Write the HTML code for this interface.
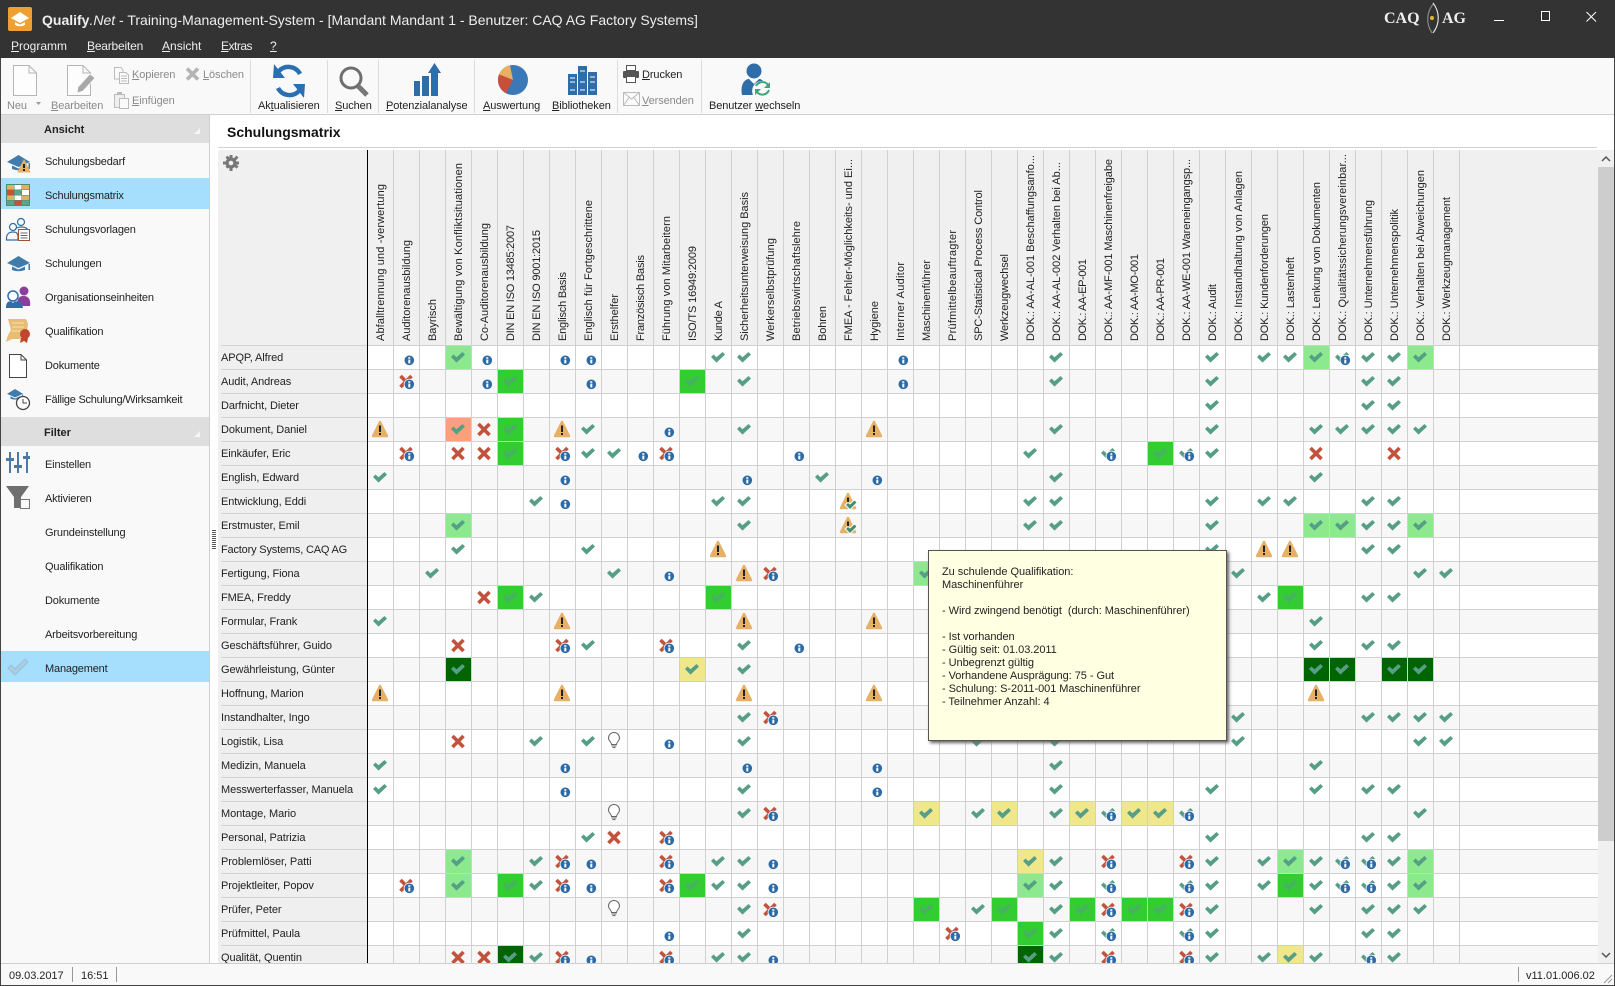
<!DOCTYPE html>
<html lang="de"><head><meta charset="utf-8"><title>Qualify.Net</title>
<style>
html,body{margin:0;padding:0;background:#fff}
body{width:1615px;height:986px;position:relative;overflow:hidden;font:11px/14px "Liberation Sans",sans-serif;color:#222}
div,span.a{position:absolute}
svg{position:absolute;left:0;top:0}
.t{white-space:nowrap}
.g{color:#8a8a8a}
.m{color:#eee;font-size:12px;top:39px;white-space:nowrap}
.tb{top:99px;white-space:nowrap;letter-spacing:-.1px}
.sm{top:68px;white-space:nowrap;letter-spacing:-.1px}
.sb{left:45px;white-space:nowrap;height:14px;letter-spacing:-.17px}
.n{left:3px;width:146px;height:23px;border-top:1px solid #d3d3d3;line-height:25px;white-space:nowrap;letter-spacing:-.1px}
u{text-decoration:underline}
text{font:11px "Liberation Sans",sans-serif;fill:#222}
</style></head><body>

<div style="left:0;top:0;width:1615px;height:58px;background:#333"></div>
<div style="left:0;top:58px;width:1615px;height:56px;background:#f9f9f9;border-bottom:1px solid #d0d0d0"></div>

<div class="t" style="left:42px;top:12px;color:#eee;font-size:14px;line-height:16px"><b>Qualify</b><i style="font-weight:400">.Net</i> - Training-Management-System - [Mandant Mandant 1 - Benutzer: CAQ AG Factory Systems]</div>
<div class="m" style="left:11px"><u>P</u>rogramm</div>
<div class="m" style="left:87px;letter-spacing:-.2px"><u>B</u>earbeiten</div>
<div class="m" style="left:162px"><u>A</u>nsicht</div>
<div class="m" style="left:221px;letter-spacing:-.5px"><u>E</u>xtras</div>
<div class="m" style="left:270px"><u>?</u></div>

<div class="t" style="left:1384px;top:10px;color:#eee;font:bold 16px/18px 'Liberation Serif',serif">CAQ</div>
<div class="t" style="left:1442px;top:10px;color:#eee;font:bold 16px/18px 'Liberation Serif',serif">AG</div>

<!-- toolbar labels -->
<div class="tb g" style="left:7px">Neu</div>
<div class="tb g" style="left:51px"><u>B</u>earbeiten</div>
<div class="sm g" style="left:132px"><u>K</u>opieren</div>
<div class="sm g" style="left:203px"><u>L</u>öschen</div>
<div class="sm g" style="left:132px;top:94px"><u>E</u>infügen</div>
<div class="tb" style="left:258px">Ak<u>t</u>ualisieren</div>
<div class="tb" style="left:335px"><u>S</u>uchen</div>
<div class="tb" style="left:386px"><u>P</u>otenzialanalyse</div>
<div class="tb" style="left:483px"><u>A</u>uswertung</div>
<div class="tb" style="left:552px"><u>B</u>ibliotheken</div>
<div class="sm" style="left:642px"><u>D</u>rucken</div>
<div class="sm g" style="left:642px;top:94px"><u>V</u>ersenden</div>
<div class="tb" style="left:709px">Benutzer <u>w</u>echseln</div>

<!-- sidebar -->
<div style="left:1px;top:115px;width:208px;height:848px;background:#f9f9f9"></div>
<div style="left:209px;top:115px;width:1px;height:848px;background:#cfcfcf"></div>
<div style="left:1px;top:115px;width:208px;height:28px;background:#dedede"></div>
<div style="left:1px;top:417px;width:208px;height:29px;background:#dedede"></div>
<div style="left:1px;top:178px;width:208px;height:31px;background:#a6defe"></div>
<div style="left:1px;top:651px;width:208px;height:31px;background:#a6defe"></div>
<div class="t" style="left:44px;top:123px"><b>Ansicht</b></div>
<div class="t" style="left:44px;top:426px"><b>Filter</b></div>
<div class="sb" style="top:155px">Schulungsbedarf</div>
<div class="sb" style="top:189px">Schulungsmatrix</div>
<div class="sb" style="top:223px">Schulungsvorlagen</div>
<div class="sb" style="top:257px">Schulungen</div>
<div class="sb" style="top:291px">Organisationseinheiten</div>
<div class="sb" style="top:325px">Qualifikation</div>
<div class="sb" style="top:359px">Dokumente</div>
<div class="sb" style="top:393px;letter-spacing:-.25px">Fällige Schulung/Wirksamkeit</div>
<div class="sb" style="top:458px">Einstellen</div>
<div class="sb" style="top:492px">Aktivieren</div>
<div class="sb" style="top:526px">Grundeinstellung</div>
<div class="sb" style="top:560px">Qualifikation</div>
<div class="sb" style="top:594px">Dokumente</div>
<div class="sb" style="top:628px">Arbeitsvorbereitung</div>
<div class="sb" style="top:662px">Management</div>

<!-- content title -->
<div class="t" style="left:227px;top:123px;font:bold 14px/18px 'Liberation Sans',sans-serif;color:#111">Schulungsmatrix</div>
<div style="left:218px;top:147px;width:1379px;height:1px;background:#d3d3d3"></div>

<!-- grid -->
<div style="left:218px;top:150px;width:1380px;height:813px;overflow:hidden">
  <div style="left:0;top:0;width:1380px;height:195px;background:#f0f0f0"></div>
  <div style="left:149px;top:0;width:1093px;height:195px;background:linear-gradient(90deg,#d0d0d0 1px,transparent 1px) 0 0/26px 100%"></div>
  <div style="left:149px;top:195px;width:1231px;height:624px;background:repeating-linear-gradient(180deg,#fff 0 24px,#f7f7f7 24px 48px)"></div>
  <div style="left:149px;top:195px;width:1231px;height:624px;background:linear-gradient(#d0d0d0 1px,transparent 1px) 0 0/100% 24px"></div>
  <div style="left:149px;top:195px;width:1093px;height:624px;background:linear-gradient(90deg,#d0d0d0 1px,transparent 1px) 0 0/26px 100%"></div>
  <div style="left:0;top:195px;width:149px;height:624px;background:#efefef">
    <div class="n" style="top:0">APQP, Alfred</div>
    <div class="n" style="top:24px">Audit, Andreas</div>
    <div class="n" style="top:48px">Darfnicht, Dieter</div>
    <div class="n" style="top:72px">Dokument, Daniel</div>
    <div class="n" style="top:96px">Einkäufer, Eric</div>
    <div class="n" style="top:120px">English, Edward</div>
    <div class="n" style="top:144px">Entwicklung, Eddi</div>
    <div class="n" style="top:168px">Erstmuster, Emil</div>
    <div class="n" style="top:192px;letter-spacing:-.18px">Factory Systems, CAQ AG</div>
    <div class="n" style="top:216px">Fertigung, Fiona</div>
    <div class="n" style="top:240px">FMEA, Freddy</div>
    <div class="n" style="top:264px">Formular, Frank</div>
    <div class="n" style="top:288px">Geschäftsführer, Guido</div>
    <div class="n" style="top:312px">Gewährleistung, Günter</div>
    <div class="n" style="top:336px">Hoffnung, Marion</div>
    <div class="n" style="top:360px">Instandhalter, Ingo</div>
    <div class="n" style="top:384px">Logistik, Lisa</div>
    <div class="n" style="top:408px">Medizin, Manuela</div>
    <div class="n" style="top:432px">Messwerterfasser, Manuela</div>
    <div class="n" style="top:456px">Montage, Mario</div>
    <div class="n" style="top:480px">Personal, Patrizia</div>
    <div class="n" style="top:504px">Problemlöser, Patti</div>
    <div class="n" style="top:528px">Projektleiter, Popov</div>
    <div class="n" style="top:552px">Prüfer, Peter</div>
    <div class="n" style="top:576px">Prüfmittel, Paula</div>
    <div class="n" style="top:600px">Qualität, Quentin</div>
  </div>
  <div style="left:149px;top:0;width:1px;height:813px;background:#000"></div>

  <svg width="1380" height="813" style="left:0;top:0">
  <defs>
    <polygon id="c" points="6,12 8.5,9.5 11.5,12.2 17.5,7 20,9.6 11.5,17.6" fill="#569f86"/>
    <path id="x" d="M7.5 7 18.5 18M18.5 7 7.5 18" stroke="#c1523b" stroke-width="3.6" fill="none"/>
    <g id="inf"><circle cx="16.3" cy="15.3" r="4.8" fill="#2e6ba6"/><rect x="15.3" y="12.2" width="2" height="1.6" fill="#fff"/><rect x="15.3" y="14.6" width="2" height="3.8" fill="#fff"/></g>
    <use id="i" href="#inf"/>
    <g id="ring"><circle cx="16.3" cy="15.3" r="5.6" fill="#fff"/><use href="#inf"/></g>
    <g id="X"><use href="#x"/><use href="#ring"/></g>
    <g id="C"><use href="#c"/><use href="#ring"/></g>
    <g id="w"><path d="M13 5 20 19H6Z" fill="#e6b066" stroke="#e6b066" stroke-width="2.4" stroke-linejoin="round"/><rect x="12" y="8.5" width="2" height="6.5" fill="#222"/><rect x="12" y="16" width="2" height="2" fill="#222"/></g>
    <g id="W"><use href="#w"/><polygon points="11,16 13,14 15,15.6 19.5,11.5 21.5,13.5 15,20" fill="#fff" stroke="#fff" stroke-width="2"/><polygon points="11,16 13,14 15,15.6 19.5,11.5 21.5,13.5 15,20" fill="#3f8f74"/></g>
    <g id="b" fill="none" stroke="#666" stroke-width="1"><path d="M10.5 15.5C10.5 13 7.5 12 7.5 9A5.5 5.5 0 0 1 18.5 9C18.5 12 15.5 13 15.5 15.5Z" fill="#fff"/><path d="M10.5 17h5M11.5 18.6h3"/></g>
    <g id="L"><rect x="1" y="1" width="25" height="23" fill="#8de98d"/><use href="#c"/></g>
    <g id="G"><rect x="1" y="1" width="25" height="23" fill="#33cc33"/><use href="#c" opacity=".6"/></g>
    <g id="D"><rect x="1" y="1" width="25" height="23" fill="#006400"/><use href="#c"/></g>
    <g id="Y"><rect x="1" y="1" width="25" height="23" fill="#f0e68c"/><use href="#c"/></g>
    <g id="O"><rect x="1" y="1" width="25" height="23" fill="#fb9f7c"/><use href="#c"/></g>
  </defs>
  <!-- column headers -->
  <g transform="translate(-218,-150)">
    <text textLength="157" transform="translate(384,341) rotate(-90)">Abfalltrennung und -verwertung</text>
    <text textLength="101" transform="translate(410,341) rotate(-90)">Auditorenausbildung</text>
    <text textLength="42" transform="translate(436,341) rotate(-90)">Bayrisch</text>
    <text textLength="178" transform="translate(462,341) rotate(-90)">Bewältigung von Konfliktsituationen</text>
    <text textLength="118" transform="translate(488,341) rotate(-90)">Co-Auditorenausbildung</text>
    <text textLength="116" transform="translate(514,341) rotate(-90)">DIN EN ISO 13485:2007</text>
    <text textLength="111" transform="translate(540,341) rotate(-90)">DIN EN ISO 9001:2015</text>
    <text textLength="69" transform="translate(566,341) rotate(-90)">Englisch Basis</text>
    <text textLength="141" transform="translate(592,341) rotate(-90)">Englisch für Fortgeschrittene</text>
    <text textLength="47" transform="translate(618,341) rotate(-90)">Ersthelfer</text>
    <text textLength="86" transform="translate(644,341) rotate(-90)">Französisch Basis</text>
    <text textLength="125" transform="translate(670,341) rotate(-90)">Führung von Mitarbeitern</text>
    <text textLength="95" transform="translate(696,341) rotate(-90)">ISO/TS 16949:2009</text>
    <text textLength="40" transform="translate(722,341) rotate(-90)">Kunde A</text>
    <text textLength="149" transform="translate(748,341) rotate(-90)">Sicherheitsunterweisung Basis</text>
    <text textLength="103" transform="translate(774,341) rotate(-90)">Werkerselbstprüfung</text>
    <text textLength="120" transform="translate(800,341) rotate(-90)">Betriebswirtschaftslehre</text>
    <text textLength="35" transform="translate(826,341) rotate(-90)">Bohren</text>
    <text textLength="182" transform="translate(852,341) rotate(-90)">FMEA - Fehler-Möglichkeits- und Ei...</text>
    <text textLength="40" transform="translate(878,341) rotate(-90)">Hygiene</text>
    <text textLength="79" transform="translate(904,341) rotate(-90)">Interner Auditor</text>
    <text textLength="81" transform="translate(930,341) rotate(-90)">Maschinenführer</text>
    <text textLength="111" transform="translate(956,341) rotate(-90)">Prüfmittelbeauftragter</text>
    <text textLength="151" transform="translate(982,341) rotate(-90)">SPC-Statistical Process Control</text>
    <text textLength="87" transform="translate(1008,341) rotate(-90)">Werkzeugwechsel</text>
    <text textLength="186" transform="translate(1034,341) rotate(-90)">DOK.: AA-AL-001 Beschaffungsanfo...</text>
    <text textLength="179" transform="translate(1060,341) rotate(-90)">DOK.: AA-AL-002 Verhalten bei Ab...</text>
    <text textLength="82" transform="translate(1086,341) rotate(-90)">DOK.: AA-EP-001</text>
    <text textLength="182" transform="translate(1112,341) rotate(-90)">DOK.: AA-MF-001 Maschinenfreigabe</text>
    <text textLength="87" transform="translate(1138,341) rotate(-90)">DOK.: AA-MO-001</text>
    <text textLength="83" transform="translate(1164,341) rotate(-90)">DOK.: AA-PR-001</text>
    <text textLength="182" transform="translate(1190,341) rotate(-90)">DOK.: AA-WE-001 Wareneingangsp...</text>
    <text textLength="57" transform="translate(1216,341) rotate(-90)">DOK.: Audit</text>
    <text textLength="170" transform="translate(1242,341) rotate(-90)">DOK.: Instandhaltung von Anlagen</text>
    <text textLength="127" transform="translate(1268,341) rotate(-90)">DOK.: Kundenforderungen</text>
    <text textLength="84" transform="translate(1294,341) rotate(-90)">DOK.: Lastenheft</text>
    <text textLength="159" transform="translate(1320,341) rotate(-90)">DOK.: Lenkung von Dokumenten</text>
    <text textLength="187" transform="translate(1346,341) rotate(-90)">DOK.: Qualitätssicherungsvereinbar...</text>
    <text textLength="141" transform="translate(1372,341) rotate(-90)">DOK.: Unternehmensführung</text>
    <text textLength="132" transform="translate(1398,341) rotate(-90)">DOK.: Unternehmenspolitik</text>
    <text textLength="171" transform="translate(1424,341) rotate(-90)">DOK.: Verhalten bei Abweichungen</text>
    <text textLength="144" transform="translate(1450,341) rotate(-90)">DOK.: Werkzeugmanagement</text>
  </g>
  <!-- cells -->
  <g transform="translate(149,195)">
  <g><use href="#i" x="26"/><use href="#L" x="78"/><use href="#i" x="104"/><use href="#i" x="182"/><use href="#i" x="208"/><use href="#c" x="338"/><use href="#c" x="364"/><use href="#i" x="520"/><use href="#c" x="676"/><use href="#c" x="832"/><use href="#c" x="884"/><use href="#c" x="910"/><use href="#L" x="936"/><use href="#C" x="962"/><use href="#c" x="988"/><use href="#c" x="1014"/><use href="#L" x="1040"/></g>
  <g transform="translate(0,24)"><use href="#X" x="26"/><use href="#i" x="104"/><use href="#G" x="130"/><use href="#i" x="208"/><use href="#G" x="312"/><use href="#c" x="364"/><use href="#i" x="520"/><use href="#c" x="676"/><use href="#c" x="832"/><use href="#c" x="988"/><use href="#c" x="1014"/></g>
  <g transform="translate(0,48)"><use href="#c" x="832"/><use href="#c" x="988"/><use href="#c" x="1014"/></g>
  <g transform="translate(0,72)"><use href="#w" x="0"/><use href="#O" x="78"/><use href="#x" x="104"/><use href="#G" x="130"/><use href="#w" x="182"/><use href="#c" x="208"/><use href="#i" x="286"/><use href="#c" x="364"/><use href="#w" x="494"/><use href="#c" x="676"/><use href="#c" x="832"/><use href="#c" x="936"/><use href="#c" x="962"/><use href="#c" x="988"/><use href="#c" x="1014"/><use href="#c" x="1040"/></g>
  <g transform="translate(0,96)"><use href="#X" x="26"/><use href="#x" x="78"/><use href="#x" x="104"/><use href="#G" x="130"/><use href="#X" x="182"/><use href="#c" x="208"/><use href="#c" x="234"/><use href="#i" x="260"/><use href="#X" x="286"/><use href="#i" x="416"/><use href="#c" x="650"/><use href="#C" x="728"/><use href="#G" x="780"/><use href="#C" x="806"/><use href="#c" x="832"/><use href="#x" x="936"/><use href="#x" x="1014"/></g>
  <g transform="translate(0,120)"><use href="#c" x="0"/><use href="#i" x="182"/><use href="#i" x="364"/><use href="#c" x="442"/><use href="#i" x="494"/><use href="#c" x="676"/><use href="#c" x="936"/></g>
  <g transform="translate(0,144)"><use href="#c" x="156"/><use href="#i" x="182"/><use href="#c" x="338"/><use href="#c" x="364"/><use href="#W" x="468"/><use href="#c" x="650"/><use href="#c" x="676"/><use href="#c" x="832"/><use href="#c" x="884"/><use href="#c" x="910"/><use href="#c" x="988"/><use href="#c" x="1014"/></g>
  <g transform="translate(0,168)"><use href="#L" x="78"/><use href="#c" x="364"/><use href="#W" x="468"/><use href="#c" x="650"/><use href="#c" x="676"/><use href="#c" x="832"/><use href="#L" x="936"/><use href="#L" x="962"/><use href="#c" x="988"/><use href="#c" x="1014"/><use href="#L" x="1040"/></g>
  <g transform="translate(0,192)"><use href="#c" x="78"/><use href="#c" x="208"/><use href="#w" x="338"/><use href="#c" x="832"/><use href="#w" x="884"/><use href="#w" x="910"/><use href="#c" x="988"/><use href="#c" x="1014"/></g>
  <g transform="translate(0,216)"><use href="#c" x="52"/><use href="#c" x="234"/><use href="#i" x="286"/><use href="#w" x="364"/><use href="#X" x="390"/><use href="#L" x="546"/><use href="#c" x="858"/><use href="#c" x="1040"/><use href="#c" x="1066"/></g>
  <g transform="translate(0,240)"><use href="#x" x="104"/><use href="#G" x="130"/><use href="#c" x="156"/><use href="#G" x="338"/><use href="#c" x="884"/><use href="#G" x="910"/><use href="#c" x="988"/><use href="#c" x="1014"/></g>
  <g transform="translate(0,264)"><use href="#c" x="0"/><use href="#w" x="182"/><use href="#w" x="364"/><use href="#w" x="494"/><use href="#c" x="936"/></g>
  <g transform="translate(0,288)"><use href="#x" x="78"/><use href="#X" x="182"/><use href="#c" x="208"/><use href="#X" x="286"/><use href="#c" x="364"/><use href="#i" x="416"/><use href="#c" x="936"/><use href="#c" x="988"/><use href="#c" x="1014"/></g>
  <g transform="translate(0,312)"><use href="#D" x="78"/><use href="#Y" x="312"/><use href="#c" x="364"/><use href="#D" x="936"/><use href="#D" x="962"/><use href="#D" x="1014"/><use href="#D" x="1040"/></g>
  <g transform="translate(0,336)"><use href="#w" x="0"/><use href="#w" x="182"/><use href="#w" x="364"/><use href="#w" x="494"/><use href="#w" x="936"/></g>
  <g transform="translate(0,360)"><use href="#c" x="364"/><use href="#X" x="390"/><use href="#c" x="858"/><use href="#c" x="988"/><use href="#c" x="1014"/><use href="#c" x="1040"/><use href="#c" x="1066"/></g>
  <g transform="translate(0,384)"><use href="#x" x="78"/><use href="#c" x="156"/><use href="#c" x="208"/><use href="#b" x="234"/><use href="#i" x="286"/><use href="#c" x="364"/><use href="#c" x="598"/><use href="#c" x="676"/><use href="#c" x="858"/><use href="#c" x="1040"/><use href="#c" x="1066"/></g>
  <g transform="translate(0,408)"><use href="#c" x="0"/><use href="#i" x="182"/><use href="#i" x="364"/><use href="#i" x="494"/><use href="#c" x="676"/><use href="#c" x="936"/></g>
  <g transform="translate(0,432)"><use href="#c" x="0"/><use href="#i" x="182"/><use href="#c" x="364"/><use href="#i" x="494"/><use href="#c" x="676"/><use href="#c" x="832"/><use href="#c" x="936"/><use href="#c" x="988"/><use href="#c" x="1014"/></g>
  <g transform="translate(0,456)"><use href="#b" x="234"/><use href="#c" x="364"/><use href="#X" x="390"/><use href="#Y" x="546"/><use href="#c" x="598"/><use href="#Y" x="624"/><use href="#c" x="676"/><use href="#Y" x="702"/><use href="#C" x="728"/><use href="#Y" x="754"/><use href="#Y" x="780"/><use href="#C" x="806"/><use href="#c" x="1040"/></g>
  <g transform="translate(0,480)"><use href="#c" x="208"/><use href="#x" x="234"/><use href="#X" x="286"/><use href="#c" x="832"/><use href="#c" x="988"/><use href="#c" x="1014"/></g>
  <g transform="translate(0,504)"><use href="#L" x="78"/><use href="#c" x="156"/><use href="#X" x="182"/><use href="#i" x="208"/><use href="#X" x="286"/><use href="#c" x="338"/><use href="#c" x="364"/><use href="#i" x="390"/><use href="#Y" x="650"/><use href="#c" x="676"/><use href="#X" x="728"/><use href="#X" x="806"/><use href="#c" x="832"/><use href="#c" x="884"/><use href="#L" x="910"/><use href="#c" x="936"/><use href="#C" x="962"/><use href="#C" x="988"/><use href="#c" x="1014"/><use href="#L" x="1040"/></g>
  <g transform="translate(0,528)"><use href="#X" x="26"/><use href="#L" x="78"/><use href="#G" x="130"/><use href="#c" x="156"/><use href="#X" x="182"/><use href="#i" x="208"/><use href="#X" x="286"/><use href="#G" x="312"/><use href="#c" x="338"/><use href="#c" x="364"/><use href="#i" x="390"/><use href="#L" x="650"/><use href="#c" x="676"/><use href="#C" x="728"/><use href="#C" x="806"/><use href="#c" x="832"/><use href="#c" x="884"/><use href="#G" x="910"/><use href="#c" x="936"/><use href="#C" x="962"/><use href="#C" x="988"/><use href="#c" x="1014"/><use href="#L" x="1040"/></g>
  <g transform="translate(0,552)"><use href="#b" x="234"/><use href="#c" x="364"/><use href="#X" x="390"/><use href="#G" x="546"/><use href="#c" x="598"/><use href="#G" x="624"/><use href="#c" x="676"/><use href="#G" x="702"/><use href="#X" x="728"/><use href="#G" x="754"/><use href="#G" x="780"/><use href="#X" x="806"/><use href="#c" x="832"/><use href="#c" x="936"/><use href="#c" x="988"/><use href="#c" x="1014"/><use href="#c" x="1040"/></g>
  <g transform="translate(0,576)"><use href="#i" x="286"/><use href="#c" x="364"/><use href="#X" x="572"/><use href="#G" x="650"/><use href="#c" x="676"/><use href="#C" x="728"/><use href="#C" x="806"/><use href="#c" x="832"/><use href="#c" x="988"/><use href="#c" x="1014"/></g>
  <g transform="translate(0,600)"><use href="#x" x="78"/><use href="#x" x="104"/><use href="#D" x="130"/><use href="#c" x="156"/><use href="#X" x="182"/><use href="#i" x="208"/><use href="#X" x="286"/><use href="#c" x="338"/><use href="#c" x="364"/><use href="#i" x="390"/><use href="#D" x="650"/><use href="#c" x="676"/><use href="#X" x="728"/><use href="#X" x="806"/><use href="#c" x="832"/><use href="#c" x="884"/><use href="#Y" x="910"/><use href="#c" x="936"/><use href="#C" x="988"/><use href="#c" x="1014"/></g>
  </g>
  </svg>
</div>

<!-- scrollbar -->
<div style="left:1598px;top:150px;width:16px;height:813px;background:#f0f0f0"></div>
<div style="left:1598px;top:167px;width:16px;height:674px;background:#cdcdcd"></div>

<!-- status bar -->
<div style="left:0;top:963px;width:1615px;height:22px;background:#f9f9f9;border-top:1px solid #cfcfcf"></div>
<div class="t" style="left:9px;top:969px;letter-spacing:-.05px">09.03.2017</div>
<div class="t" style="left:81px;top:969px">16:51</div>
<div style="left:72px;top:967px;width:1px;height:15px;background:#999"></div>
<div style="left:116px;top:967px;width:1px;height:15px;background:#999"></div>
<div style="left:1518px;top:967px;width:1px;height:15px;background:#999"></div>
<div class="t" style="left:1526px;top:969px">v11.01.006.02</div>

<!-- chrome icons -->
<svg width="1615" height="986" style="pointer-events:none">
  <!-- app icon -->
  <rect x="8" y="7" width="24" height="24" rx="2" fill="#f0a030"/>
  <path d="M11 18 20 12 29 18 20 23Z M15 22v3q5 2.5 10 0v-3l-5 2.6Z" fill="#fff"/>
  <!-- logo arc -->
  <path d="M1434 3C1426 12 1426 24 1432 33" stroke="#888" stroke-width="1.2" fill="none"/>
  <path d="M1433 3C1440 12 1440 24 1433 33" stroke="#ddd" stroke-width="1.2" fill="none"/>
  <circle cx="1432" cy="18" r="2" fill="#e8b830"/>
  <!-- window buttons -->
  <rect x="1494" y="20" width="10" height="1" fill="#fff"/>
  <rect x="1541.5" y="11.5" width="8" height="9" fill="none" stroke="#fff"/>
  <path d="M1586.5 12 1596 21.5M1596 12 1586.5 21.5" stroke="#fff" fill="none"/>

  <!-- Neu -->
  <path d="M13.5 65.5H29L36.5 73V95.5H13.5Z M29 65.5V73H36.5" fill="#fdfdfd" stroke="#b5b5b5"/>
  <path d="M36 102 41 102 38.500 105Z" fill="#999"/>
  <!-- Bearbeiten -->
  <path d="M67.500 65.500H83L90.500 73V95.500H67.500Z M83 65.500V73H90.500" fill="#fdfdfd" stroke="#b5b5b5"/>
  <path d="M77 93 78 87 90 74 95 78 83 91Z" fill="#a8a8a8" stroke="#f9f9f9" stroke-width=".8"/>
  <!-- Kopieren -->
  <g fill="#fafafa" stroke="#bbb"><path d="M114.500 67.500H121L123 70V79H114.500Z"/><path d="M119.500 72.500H126L128.500 75V83.500H119.500Z"/></g>
  <path d="M121 76h6M121 78.500h6M121 81h6" stroke="#bbb"/>
  <!-- Löschen -->
  <path d="M187 68.500 198 79.500M198 68.500 187 79.500" stroke="#b5b5b5" stroke-width="3.600" fill="none"/>
  <!-- Einfügen -->
  <g fill="#efefef" stroke="#bbb"><path d="M114.500 94.500H124.500V107.500H114.500Z"/><path d="M119.500 98.500H128.500V108.500H119.500Z" fill="#fafafa"/></g>
  <rect x="117" y="92" width="5" height="3" fill="#bbb"/>
  <!-- Aktualisieren -->
  <g fill="none" stroke="#2a6fb0" stroke-width="4.500">
    <path d="M300 74A13 13 0 0 0 279 71"/>
    <path d="M278 88A13 13 0 0 0 299 91"/>
  </g>
  <path d="M274 64 285 78 273 78Z M304 98 293 84 305 84Z" fill="#2a6fb0"/>
  <!-- Suchen -->
  <circle cx="351" cy="78" r="10" fill="none" stroke="#6e6e6e" stroke-width="3"/>
  <path d="M358 86 367 95" stroke="#777" stroke-width="5" fill="none"/>
  <!-- Potenzial -->
  <g fill="#2f6da8"><rect x="414" y="81" width="6" height="15"/><rect x="422" y="76" width="7" height="20"/><rect x="431" y="72" width="7" height="24"/><path d="M428 73 434.500 63 441 73Z"/></g>
  <!-- Pie -->
  <circle cx="513" cy="80" r="15" fill="#3b78b8"/>
  <path d="M513 80 510 65.300A15 15 0 0 0 499 74.500Z" fill="#e8b060"/>
  <path d="M513 80 499 74.500A15 15 0 0 0 506 93.300Z" fill="#c8503a"/>
  <!-- Bibliotheken -->
  <g fill="#2f6da8"><rect x="568" y="74" width="9" height="21"/><rect x="578" y="66" width="9" height="29"/><rect x="588" y="72" width="9" height="23"/></g>
  <path d="M570 78h5M570 82h5M570 90h5M580 71h5M580 82h5M580 90h5M590 77h5M590 82h5M590 90h5" stroke="#fff" fill="none"/>
  <!-- Drucken -->
  <rect x="623" y="71" width="16" height="7" rx="1" fill="#555"/><rect x="626.500" y="65.500" width="9" height="5" fill="#fff" stroke="#555"/><rect x="626.500" y="76.500" width="9" height="6" fill="#fff" stroke="#555"/>
  <!-- Versenden -->
  <path d="M623.500 92.500H639.500V105.500H623.500Z M623.500 92.500 631.500 99 639.500 92.500 M623.500 105.500 629 97.500M639.500 105.500 634 97.500" fill="#fbfbfb" stroke="#bbb"/>
  <!-- Benutzer -->
  <circle cx="754" cy="71" r="7.500" fill="#2f6da8"/>
  <path d="M742 95C740 84 745 79 749 79L754 84 759 79C761 79 762 80 763 81A10 10 0 0 0 753 95Z" fill="#2f6da8"/>
  <g fill="none" stroke="#3aa87a" stroke-width="2"><path d="M756 86A7 7 0 0 1 768 85"/><path d="M769 90A7 7 0 0 1 757 92"/></g>
  <path d="M770 82v6h-6ZM755 95v-6h6Z" fill="#3aa87a"/>
  <!-- toolbar separators -->
  <path d="M250.500 60V113M327.500 60V113M378.500 60V113M474.500 60V113M617.500 60V113M701.500 60V113" stroke="#dcdcdc" fill="none"/>

  <!-- section triangles -->
  <path d="M194 134H200V128Z M194 437H200V431Z" fill="#f6f6f6"/>

  <!-- sidebar icons -->
  <defs>
    <g id="hat"><path d="M0 7 11.500 0 23 7 11.500 12Z"/><path d="M5 10.500v3.500q6.500 2.500 13 0v-3.500l-6.500 3z"/><rect x="21.500" y="8" width="1.500" height="6"/></g>
  </defs>
  <use href="#hat" x="7" y="155" fill="#3f7cac"/>
  <path d="M24 160 30 172H18Z" fill="#e6b066" stroke="#e6b066" stroke-linejoin="round"/><rect x="23" y="164" width="2" height="4" fill="#222"/><rect x="23" y="169" width="2" height="2" fill="#222"/>
  <!-- matrix -->
  <rect x="6" y="184" width="24" height="22" fill="#4a8f6f"/>
  <rect x="7" y="185" width="7" height="4.500" fill="#e0b060"/><rect x="14.500" y="185" width="7" height="4.500" fill="#fff"/><rect x="22" y="185" width="7" height="4.500" fill="#e0b060"/>
  <rect x="7" y="190" width="7" height="5" fill="#c8503a"/><rect x="14.500" y="190" width="7" height="5" fill="#5aa58a"/><rect x="22" y="190" width="7" height="5" fill="#fff"/>
  <rect x="7" y="195.500" width="7" height="4.500" fill="#e0b060"/><rect x="14.500" y="195.500" width="7" height="4.500" fill="#fff"/><rect x="22" y="195.500" width="7" height="4.500" fill="#e0b060"/>
  <rect x="7" y="200.500" width="7" height="4.500" fill="#5aa58a"/><rect x="14.500" y="200.500" width="7" height="4.500" fill="#c8503a"/><rect x="22" y="200.500" width="7" height="4.500" fill="#5aa58a"/>
  <!-- Vorlagen -->
  <g fill="none" stroke="#2f6da8" stroke-width="1.200"><circle cx="13" cy="227" r="3.500"/><path d="M6.500 240C6 234 9 232 13 232S17 233 18 236V240Z"/></g>
  <g fill="none" stroke="#2f6da8" stroke-width="1.200"><circle cx="21" cy="222" r="3.500"/><path d="M15 230C16 226 26 226 28 230"/></g>
  <rect x="18.500" y="229.500" width="11" height="11" fill="#fff" stroke="#a0522d"/><path d="M20.500 233h7M20.500 235.500h7M20.500 238h7" stroke="#666"/>
  <use href="#hat" x="7" y="256" fill="#3f7cac"/>
  <!-- Org -->
  <circle cx="24" cy="291" r="4.500" fill="#8a3f9e"/><path d="M17 306C17 297 20 296 24 296S31 299 30 306Z" fill="#8a3f9e"/>
  <circle cx="13" cy="296" r="5" fill="#fff" stroke="#2f6da8" stroke-width="1.500"/><path d="M6 308C6 301 10 300 13 303 16 300 22 301 23 308Z" fill="#2f6da8"/>
  <!-- Qualifikation -->
  <path d="M8 319H26L28 324 26 339H12L6 342 8 335 11 330Z" fill="#e6bd72"/><path d="M12 323H24M12 327H24M12 331H20" stroke="#f6e2b5" fill="none"/>
  <circle cx="25" cy="334" r="5" fill="#c2452f"/><path d="M21 338 20 343 24 341 27 343 28 338Z" fill="#c2452f"/>
  <!-- Dokumente -->
  <path d="M9.500 354.500H21L26.500 360V377.500H9.500Z M21 354.500V360H26.500" fill="#fff" stroke="#444"/>
  <!-- Fällige -->
  <use href="#hat" transform="translate(7,389) scale(.7)" fill="#3f7cac"/>
  <circle cx="23" cy="403" r="6.500" fill="#fff" stroke="#444" stroke-width="1.300"/><path d="M23 399V403H27" stroke="#444" fill="none"/>
  <!-- Einstellen -->
  <g fill="#4a7aa5"><rect x="9" y="452" width="2" height="21"/><rect x="17" y="452" width="2" height="21"/><rect x="26" y="452" width="2" height="21"/><rect x="6" y="458" width="8" height="3"/><rect x="14" y="465" width="8" height="3"/><rect x="23" y="456" width="7" height="3"/></g>
  <!-- Aktivieren -->
  <path d="M6 486H29L21 497V508H14V497Z" fill="#6f6f6f"/><rect x="20.500" y="499.500" width="9" height="9" fill="#f9f9f9" stroke="#777"/>
  <!-- Management check -->
  <path d="M8 668 11 665 15 669 25 659 28 662 15 675Z" fill="#a7cfe4" stroke="#9cc0d4"/>
  <!-- gear -->
  <g fill="#777"><circle cx="231" cy="163" r="5.500"/><path d="M229.500 155h3v16h-3zM223 161.500h16v3h-16zM225.500 157.600l2-2 11 11-2 2zM236.500 155.600l2 2-11 11-2-2z"/></g><circle cx="231" cy="163" r="2.300" fill="#f0f0f0"/>
  <!-- splitter -->
  <path d="M212 530.500h4M212 532.500h4M212 534.500h4M212 536.500h4M212 538.500h4M212 540.500h4M212 542.500h4M212 544.500h4M212 546.500h4M212 548.500h4" stroke="#555" fill="none"/>
  <!-- scroll arrows -->
  <path d="M1602 161 1606 157 1610 161" stroke="#555" stroke-width="1.500" fill="none"/>
  <path d="M1602 953 1606 957 1610 953" stroke="#555" stroke-width="1.500" fill="none"/>
  <!-- grip -->
  <path d="M1604 983 1612 975M1608 983 1612 979" stroke="#999" fill="none"/>
  <!-- window edge -->
  <rect x="0" y="58" width="1" height="928" fill="#444"/><rect x="1614" y="58" width="1" height="928" fill="#444"/><rect x="0" y="985" width="1615" height="1" fill="#444"/>
</svg>

<!-- tooltip -->
<div style="left:928px;top:550px;width:297px;height:189px;background:#ffffe1;border:1px solid #555;box-shadow:2px 2px 3px #666"></div>
<div class="t" style="left:942px;top:566px;line-height:13px;white-space:pre;color:#222;letter-spacing:-.05px">Zu schulende Qualifikation:
Maschinenführer

- Wird zwingend benötigt  (durch: Maschinenführer)

- Ist vorhanden
- Gültig seit: 01.03.2011
- Unbegrenzt gültig
- Vorhandene Ausprägung: 75 - Gut
- Schulung: S-2011-001 Maschinenführer
- Teilnehmer Anzahl: 4</div>
</body></html>
